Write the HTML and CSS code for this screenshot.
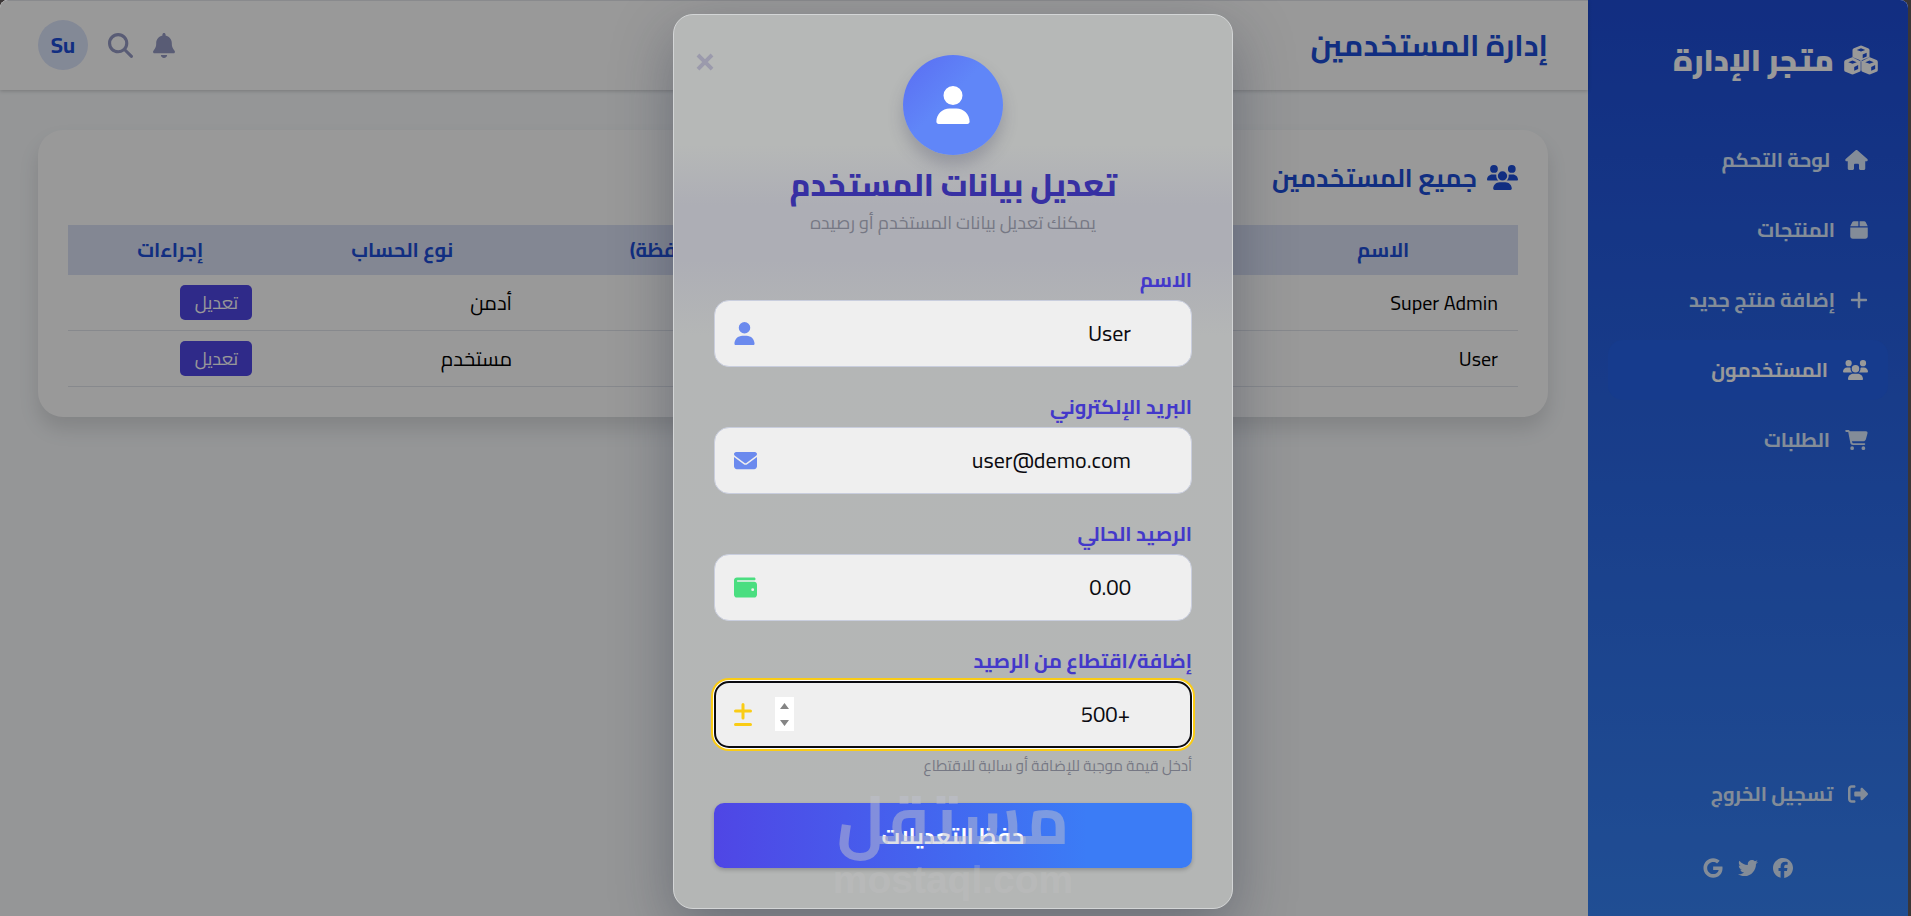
FILE: index.html
```html
<!DOCTYPE html>
<html lang="ar" dir="rtl">
<head>
<meta charset="utf-8">
<title>إدارة المستخدمين</title>
<link rel="stylesheet" href="styles.css">
</head>
<body>
<svg class="sprite" aria-hidden="true">
  <symbol id="i-user" viewBox="0 0 448 512"><path d="M224 256A128 128 0 1 0 224 0a128 128 0 1 0 0 256zm-45.7 48C79.8 304 0 383.8 0 482.3C0 498.7 13.3 512 29.7 512l388.6 0c16.4 0 29.7-13.3 29.7-29.7C448 383.8 368.2 304 269.7 304l-91.4 0z"/></symbol>
  <symbol id="i-envelope" viewBox="0 0 512 512"><path d="M48 64C21.500 64 0 85.500 0 112c0 15.100 7.100 29.300 19.200 38.400L236.800 313.600c11.400 8.500 27 8.500 38.400 0L492.800 150.400c12.100-9.100 19.200-23.300 19.200-38.400c0-26.500-21.500-48-48-48L48 64zM0 176L0 384c0 35.300 28.700 64 64 64l384 0c35.300 0 64-28.700 64-64l0-208L294.400 339.200c-22.800 17.100-54 17.100-76.800 0L0 176z"/></symbol>
  <symbol id="i-wallet" viewBox="0 0 512 512"><path d="M64 32C28.700 32 0 60.700 0 96L0 416c0 35.300 28.700 64 64 64l384 0c35.300 0 64-28.700 64-64l0-224c0-35.300-28.700-64-64-64L80 128c-8.800 0-16-7.200-16-16s7.200-16 16-16l368 0c17.700 0 32-14.300 32-32s-14.300-32-32-32L64 32zM416 272a32 32 0 1 1 0 64 32 32 0 1 1 0-64z"/></symbol>
  <symbol id="i-home" viewBox="0 0 576 512"><path d="M575.8 255.500c0 18-15 32.100-32 32.100l-32 0 .7 160.200c0 2.700-.2 5.400-.5 8.100l0 16.200c0 22.100-17.900 40-40 40l-16 0c-1.100 0-2.200 0-3.300-.1c-1.400 .1-2.800 .1-4.200 .1L416 512l-24 0c-22.100 0-40-17.900-40-40l0-24 0-64c0-17.700-14.300-32-32-32l-64 0c-17.700 0-32 14.300-32 32l0 64 0 24c0 22.100-17.900 40-40 40l-24 0-31.900 0c-1.500 0-3-.1-4.500-.2c-1.200 .1-2.400 .2-3.600 .2l-16 0c-22.100 0-40-17.900-40-40l0-112c0-.9 0-1.900 .1-2.800l0-69.700-32 0c-18 0-32-14-32-32.100c0-9 3-17 10-24L266.400 8c7-7 15-8 22-8s15 2 21 7L564.800 231.500c8 7 12 15 11 24z"/></symbol>
  <symbol id="i-box" viewBox="0 0 448 512"><path d="M50.700 58.500L0 160l208 0 0-128L93.700 32C75.500 32 58.900 42.300 50.700 58.500zM240 160l208 0L397.300 58.500C389.100 42.300 372.500 32 354.300 32L240 32l0 128zm208 32L0 192 0 416c0 35.300 28.700 64 64 64l320 0c35.300 0 64-28.700 64-64l0-224z"/></symbol>
  <symbol id="i-plus" viewBox="0 0 448 512"><path d="M256 80c0-17.700-14.300-32-32-32s-32 14.300-32 32l0 144L48 224c-17.700 0-32 14.300-32 32s14.300 32 32 32l144 0 0 144c0 17.700 14.300 32 32 32s32-14.300 32-32l0-144 144 0c17.700 0 32-14.300 32-32s-14.300-32-32-32l-144 0 0-144z"/></symbol>
  <symbol id="i-users" viewBox="0 0 640 512"><path d="M144 0a80 80 0 1 1 0 160A80 80 0 1 1 144 0zM512 0a80 80 0 1 1 0 160A80 80 0 1 1 512 0zM0 298.700C0 239.800 47.800 192 106.700 192l42.700 0c15.900 0 31 3.500 44.600 9.700c-1.300 7.200-1.900 14.700-1.900 22.300c0 38.200 16.800 72.500 43.300 96c-.2 0-.4 0-.7 0L21.300 320C9.600 320 0 310.400 0 298.700zM405.300 320c-.2 0-.4 0-.7 0c26.600-23.500 43.300-57.800 43.300-96c0-7.600-.7-15-1.900-22.300c13.600-6.300 28.700-9.700 44.600-9.700l42.700 0C592.200 192 640 239.800 640 298.700c0 11.800-9.600 21.300-21.300 21.300l-213.300 0zM224 224a96 96 0 1 1 192 0 96 96 0 1 1 -192 0zM128 485.300C128 411.700 187.700 352 261.300 352l117.300 0C452.300 352 512 411.700 512 485.300c0 14.700-11.900 26.700-26.700 26.700l-330.700 0c-14.700 0-26.700-11.900-26.700-26.700z"/></symbol>
  <symbol id="i-cart" viewBox="0 0 576 512"><path d="M0 24C0 10.700 10.700 0 24 0L69.500 0c22 0 41.500 12.800 50.600 32l411 0c26.300 0 45.500 25 38.600 50.400l-41 152.300c-8.500 31.400-37 53.300-69.500 53.300l-288.500 0 5.400 28.500c2.200 11.300 12.100 19.500 23.600 19.500L488 336c13.300 0 24 10.700 24 24s-10.700 24-24 24l-288.300 0c-34.600 0-64.300-24.600-70.700-58.500L77.400 54.500c-.7-3.800-4-6.500-7.900-6.500L24 48C10.700 48 0 37.300 0 24zM128 464a48 48 0 1 1 96 0 48 48 0 1 1 -96 0zm336-48a48 48 0 1 1 0 96 48 48 0 1 1 0-96z"/></symbol>
  <symbol id="i-logout" viewBox="0 0 512 512"><path d="M377.900 105.900L500.700 228.700c7.200 7.200 11.300 17.100 11.300 27.300s-4.100 20.100-11.300 27.300L377.900 406.100c-6.400 6.400-15 9.900-24 9.900c-18.700 0-33.900-15.200-33.900-33.900l0-62.100-128 0c-17.700 0-32-14.300-32-32l0-64c0-17.700 14.300-32 32-32l128 0 0-62.100c0-18.700 15.200-33.900 33.900-33.900c9 0 17.600 3.600 24 9.900zM160 96L96 96c-17.700 0-32 14.300-32 32l0 256c0 17.700 14.300 32 32 32l64 0c17.700 0 32 14.300 32 32s-14.300 32-32 32l-64 0c-53 0-96-43-96-96L0 128C0 75 43 32 96 32l64 0c17.700 0 32 14.300 32 32s-14.300 32-32 32z"/></symbol>
  <symbol id="i-bell" viewBox="0 0 448 512"><path d="M224 0c-17.700 0-32 14.300-32 32l0 19.200C119 66 64 130.600 64 208l0 18.800c0 47-17.300 92.400-48.500 127.600l-7.400 8.300c-8.400 9.400-10.400 22.900-5.300 34.400S19.400 416 32 416l384 0c12.600 0 24-7.400 29.200-18.900s3.100-25-5.300-34.400l-7.400-8.300C401.300 319.200 384 273.900 384 226.800l0-18.800c0-77.400-55-142-128-156.800L256 32c0-17.700-14.300-32-32-32zm45.300 493.300c12-12 18.700-28.300 18.700-45.300l-64 0-64 0c0 17 6.700 33.300 18.700 45.300s28.300 18.700 45.300 18.700s33.300-6.700 45.300-18.700z"/></symbol>
  <symbol id="i-search" viewBox="0 0 512 512"><path d="M416 208c0 45.900-14.900 88.300-40 122.700L502.600 457.400c12.500 12.500 12.500 32.800 0 45.300s-32.800 12.500-45.300 0L330.700 376c-34.400 25.200-76.800 40-122.700 40C93.100 416 0 322.900 0 208S93.100 0 208 0S416 93.100 416 208zM208 352a144 144 0 1 0 0-288 144 144 0 1 0 0 288z"/></symbol>
  <symbol id="i-plusminus" viewBox="0 0 18 24"><path d="M9 1.500V15M1.500 8H16.500M1.500 21.500H16.500" fill="none" stroke="currentColor" stroke-width="3" stroke-linecap="round"/></symbol>
  <symbol id="i-close" viewBox="0 0 384 512"><path d="M72 136L312 376M312 136L72 376" fill="none" stroke="currentColor" stroke-width="84" stroke-linecap="square"/></symbol>
  <symbol id="i-cubes" viewBox="0 0 36 31"><path fill-rule="evenodd" d="M17 .4Q18 0 19 .4L25.500 3Q27 3.700 27 5V12.600L18 17L9 12.600V5Q9 3.700 10.500 3ZM13.500 4.800L18 6.600L22.500 4.800L18 3ZM19.800 9.800V13.600L24 11.700V7.900ZM8 12.800Q9 12.400 10 12.800L16.500 15.500Q17.700 16.200 17.700 17.500V26Q17.700 27.400 16.500 28L10 30.700Q9 31 8 30.700L1.500 28Q.2 27.400 .2 26V17.500Q.2 16.200 1.500 15.500ZM4.500 17.800L9 19.600L13.500 17.800L9 16ZM10.800 22.800V27L15 25.100V20.900ZM26 12.800Q27 12.400 28 12.800L34.500 15.500Q35.800 16.200 35.800 17.500V26Q35.800 27.400 34.500 28L28 30.700Q27 31 26 30.700L19.500 28Q18.300 27.400 18.300 26V17.500Q18.300 16.200 19.500 15.500ZM22.500 17.800L27 19.600L31.500 17.800L27 16ZM28.800 22.800V27L33 25.100V20.900Z"/></symbol>
  <symbol id="i-google" viewBox="0 0 488 512"><path d="M488 261.800C488 403.300 391.100 504 248 504 110.800 504 0 393.200 0 256S110.800 8 248 8c66.800 0 123 24.500 166.300 64.900l-67.500 64.900C258.500 52.600 94.300 116.600 94.300 256c0 86.500 69.100 156.600 153.700 156.600 98.200 0 135-70.400 140.800-106.900H248v-85.300h236.100c2.300 12.700 3.900 24.900 3.900 41.400z"/></symbol>
  <symbol id="i-twitter" viewBox="0 0 512 512"><path d="M459.370 151.716c.325 4.548.325 9.097.325 13.645 0 138.720-105.583 298.558-298.558 298.558-59.452 0-114.680-17.219-161.137-47.106 8.447.974 16.568 1.299 25.340 1.299 49.055 0 94.213-16.568 130.274-44.832-46.132-.975-84.792-31.188-98.112-72.772 6.498.974 12.995 1.624 19.818 1.624 9.421 0 18.843-1.300 27.614-3.573-48.081-9.747-84.143-51.980-84.143-102.985v-1.299c13.969 7.797 30.214 12.670 47.431 13.319-28.264-18.843-46.781-51.005-46.781-87.391 0-19.492 5.197-37.360 14.294-52.954 51.655 63.675 129.300 105.258 216.365 109.807-1.624-7.797-2.599-15.918-2.599-24.040 0-57.828 46.782-104.934 104.934-104.934 30.213 0 57.502 12.670 76.670 33.137 23.715-4.548 46.456-13.320 66.599-25.340-7.798 24.366-24.366 44.833-46.132 57.827 21.117-2.273 41.584-8.122 60.426-16.243-14.292 20.791-32.161 39.308-52.628 54.253z"/></symbol>
  <symbol id="i-facebook" viewBox="0 0 512 512"><path d="M512 256C512 114.600 397.400 0 256 0S0 114.600 0 256C0 376 82.700 476.800 194.200 504.500V334.200H141.400V256h52.800V222.300c0-87.100 39.400-127.500 125-127.500c16.200 0 44.200 3.200 55.700 6.400V172c-6-.6-16.500-1-29.600-1c-42 0-58.200 15.900-58.200 57.200V256h83.600l-14.400 78.200H287V510.100C413.800 494.800 512 386.900 512 256z"/></symbol>
</svg>

<div class="app">
  <aside class="sidebar">
    <div class="brand"><svg class="brand-icon"><use href="#i-cubes"/></svg><span>متجر الإدارة</span></div>
    <nav class="nav">
      <a class="nav-link" href="#"><svg class="ic w23"><use href="#i-home"/></svg>لوحة التحكم</a>
      <a class="nav-link" href="#"><svg class="ic w18"><use href="#i-box"/></svg>المنتجات</a>
      <a class="nav-link" href="#"><svg class="ic w18"><use href="#i-plus"/></svg>إضافة منتج جديد</a>
      <a class="nav-link active" href="#"><svg class="ic w25"><use href="#i-users"/></svg>المستخدمون</a>
      <a class="nav-link" href="#"><svg class="ic w23"><use href="#i-cart"/></svg>الطلبات</a>
    </nav>
    <a class="nav-link logout" href="#"><svg class="ic w20"><use href="#i-logout"/></svg>تسجيل الخروج</a>
    <div class="social">
      <a href="#" aria-label="Facebook"><svg class="ic w20"><use href="#i-facebook"/></svg></a>
      <a href="#" aria-label="Twitter"><svg class="ic w20"><use href="#i-twitter"/></svg></a>
      <a href="#" aria-label="Google"><svg class="ic w20"><use href="#i-google"/></svg></a>
    </div>
  </aside>

  <div class="page">
    <header class="topbar">
      <h1>إدارة المستخدمين</h1>
      <div class="tools">
        <button class="tool" type="button" aria-label="الإشعارات"><svg class="tool-icon bell"><use href="#i-bell"/></svg></button>
        <button class="tool" type="button" aria-label="بحث"><svg class="tool-icon"><use href="#i-search"/></svg></button>
        <span class="avatar">Su</span>
      </div>
    </header>
    <main class="content">
      <section class="card">
        <h2><svg class="card-icon"><use href="#i-users"/></svg>جميع المستخدمين</h2>
        <table class="users">
          <colgroup><col class="c-name"><col class="c-mail"><col class="c-balance"><col class="c-type"><col class="c-action"></colgroup>
          <thead><tr><th>الاسم</th><th>البريد الإلكتروني</th><th>الرصيد (المحفظة)</th><th>نوع الحساب</th><th>إجراءات</th></tr></thead>
          <tbody>
            <tr><td>Super Admin</td><td></td><td></td><td>أدمن</td><td><button class="edit" type="button">تعديل</button></td></tr>
            <tr><td>User</td><td></td><td></td><td>مستخدم</td><td><button class="edit" type="button">تعديل</button></td></tr>
          </tbody>
        </table>
      </section>
    </main>
  </div>

  <div class="overlay">
    <form class="modal" role="dialog" aria-labelledby="modal-title">
      <button class="close" type="button" aria-label="إغلاق"><svg class="close-icon"><use href="#i-close"/></svg></button>
      <div class="badge"><svg class="badge-icon"><use href="#i-user"/></svg></div>
      <h2 class="modal-title" id="modal-title">تعديل بيانات المستخدم</h2>
      <p class="modal-sub">يمكنك تعديل بيانات المستخدم أو رصيده</p>
      <div class="fields">
        <div class="field">
          <label for="name">الاسم</label>
          <div class="control"><input id="name" type="text" value="User"><svg class="field-icon blue narrow"><use href="#i-user"/></svg></div>
        </div>
        <div class="field">
          <label for="mail">البريد الإلكتروني</label>
          <div class="control"><input id="mail" type="text" value="user@demo.com"><svg class="field-icon blue"><use href="#i-envelope"/></svg></div>
        </div>
        <div class="field">
          <label for="balance">الرصيد الحالي</label>
          <div class="control"><input id="balance" type="text" value="0.00" readonly><svg class="field-icon green"><use href="#i-wallet"/></svg></div>
        </div>
        <div class="field">
          <label for="amount">إضافة/اقتطاع من الرصيد</label>
          <div class="control"><input class="current" id="amount" type="number" placeholder="+500"><svg class="field-icon yellow slim"><use href="#i-plusminus"/></svg>
            <svg class="spin" viewBox="0 0 19 34"><rect width="19" height="34" fill="#fff"/><path d="M5 12L9.500 6L14 12ZM5 23L9.500 29L14 23Z" fill="#858585"/></svg></div>
          <p class="hint">أدخل قيمة موجبة للإضافة أو سالبة للاقتطاع</p>
        </div>
      </div>
      <div class="submit-row">
        <button class="submit" type="submit">حفظ التعديلات</button>
        <div class="watermark" aria-hidden="true"><span class="wm-ar">مستقل</span><span class="wm-en">mostaql.com</span></div>
      </div>
    </form>
  </div>
</div>
</body>
</html>
```
FILE: styles.css
```css
* { box-sizing: border-box; }
body {
  margin: 0;
  background: #3b3636;
  font-family: Cairo, Roboto, "DejaVu Sans", sans-serif;
  font-size: 20px;
  line-height: 30px;
  color: #000;
}
h1, h2, p { margin: 0; }
a { color: inherit; text-decoration: none; }
button, input { font: inherit; }
svg { display: block; fill: currentColor; flex: none; }
.sprite { position: absolute; width: 0; height: 0; }

.app {
  position: relative;
  display: flex;
  min-height: 100vh;
  margin-right: 3px;
  border-radius: 8px 8px 0 0;
  overflow: hidden;
  background: #f8fafc;
}

.sidebar {
  flex: none;
  width: 320px;
  display: flex;
  flex-direction: column;
  padding: 30px 20px;
  background: linear-gradient(#1e4dd8, #3682f6);
  color: #dbeafe;
}
.brand {
  display: flex;
  align-items: center;
  gap: 10px;
  height: 60px;
  padding: 0 10px;
  margin-bottom: 40px;
  color: #fff;
  font-size: 30px;
  font-weight: 900;
}
.brand-icon { width: 34px; height: 30px; }
.nav { display: flex; flex-direction: column; gap: 10px; flex: 1; }
.nav-link {
  display: flex;
  align-items: center;
  gap: 15px;
  height: 60px;
  padding: 0 20px;
  border-radius: 15px;
  font-size: 20px;
  font-weight: 700;
}
.active { background: #2563eb; color: #fff; }
.ic { height: 20px; }
.w18 { width: 18px; }
.w20 { width: 20px; }
.w23 { width: 23px; }
.w25 { width: 25px; }
.social { display: flex; justify-content: center; gap: 15px; margin: 34px 0 8px; }

.page { flex: 1; min-width: 0; }
.topbar {
  display: flex;
  align-items: center;
  justify-content: space-between;
  height: 90px;
  padding: 0 40px 1px 38px;
  background: #fff;
  border-top: 1px solid #e5e7eb;
  box-shadow: 0 1px 4px rgba(0, 0, 0, .2);
}
h1 { font-size: 30px; color: #1d4ed8; }
.tools { display: flex; align-items: center; gap: 20px; }
.tool { border: 0; padding: 0; background: none; color: #9499c4; }
.tool-icon { width: 25px; height: 25px; }
.bell { width: 22px; }
.avatar {
  display: grid;
  place-items: center;
  width: 50px;
  height: 50px;
  border-radius: 50%;
  background: #dbe4fb;
  color: #1d4ed8;
  font-size: 22px;
  font-weight: 700;
}
.content { padding: 40px 40px 40px 38px; }
.card {
  padding: 30px;
  border-radius: 25px;
  background: #fff;
  box-shadow: 0 12px 20px rgba(0, 0, 0, .12);
}
.card h2 {
  display: flex;
  align-items: center;
  gap: 10px;
  height: 35px;
  margin-bottom: 30px;
  color: #1d4ed8;
  font-size: 25px;
}
.card-icon { width: 31px; height: 25px; }
.users { width: 100%; border-collapse: separate; border-spacing: 0; table-layout: fixed; }
.c-name { width: 18.6%; }
.c-mail { width: 25.4%; }
.c-balance { width: 24%; }
.c-type { width: 17.9%; }
.c-action { width: 14.1%; }
.users th { height: 50px; padding: 0 20px; background: #dbe2f6; color: #1d4ed8; font-size: 20px; }
.users td { height: 56px; padding: 0 20px; border-bottom: 1px solid #e2e4ec; text-align: right; }
.edit {
  display: block;
  width: 72px;
  height: 35px;
  padding: 0;
  border: 0;
  border-radius: 5px;
  background: #4f46e5;
  color: #fff;
  font-size: 18px;
}

.overlay {
  position: absolute;
  inset: 0;
  display: flex;
  justify-content: center;
  align-items: flex-start;
  padding: 14px 2px 7px 0;
  background: rgba(0, 0, 0, .4);
}
.modal {
  position: relative;
  width: 560px;
  padding: 40px;
  border: 1px solid #d3d5d6;
  border-radius: 20px;
  background: linear-gradient(#b6b8b7 130px, #adaeb5 190px, #adaeb5 245px, #b4b6b6 320px, #b4b6b5);
  box-shadow: 0 20px 60px rgba(31, 38, 60, .36);
}
.close {
  position: absolute;
  top: 35px;
  left: 20px;
  padding: 0;
  border: 0;
  background: none;
  color: #9b9aac;
}
.close-icon { width: 22px; height: 24px; }
.badge {
  display: grid;
  place-items: center;
  width: 100px;
  height: 100px;
  margin: 0 auto 8px;
  border-radius: 50%;
  background: linear-gradient(135deg, #5a6cf2, #6086f8 45%);
  color: #fff;
  box-shadow: 0 10px 15px rgba(60, 60, 90, .25);
}
.badge-icon { width: 34px; height: 38px; }
.modal-title { line-height: 45px; font-size: 31px; font-weight: 800; text-align: center; color: #3730a3; }
.modal-sub { margin: 2px 0 30px; line-height: 25px; font-size: 18px; text-align: center; color: #767884; }
.fields { display: flex; flex-direction: column; gap: 25px; }
.field label { display: block; margin-bottom: 5px; color: #4338ca; font-size: 20px; font-weight: 700; }
.control { position: relative; }
.control input {
  display: block;
  width: 100%;
  height: 67px;
  padding: 0 60px 2px;
  border: 1px solid #c9cede;
  border-radius: 15px;
  background: #efefef;
  color: #0b0b10;
  font-size: 22px;
  outline: none;
}
.control input::placeholder { color: #0b0b10; opacity: 1; }
.control input::-webkit-inner-spin-button { appearance: none; display: none; }
.control .current { border: 2px solid #0b0b10; box-shadow: 0 0 0 1px #fff, 0 0 0 3px #facc15; }
.field-icon { position: absolute; left: 20px; top: 22px; width: 23px; height: 23px; }
.narrow { width: 21px; }
.slim { width: 18px; height: 24px; }
.blue { color: #6b8aee; }
.green { color: #4ade80; }
.yellow { color: #facc15; }
.spin { position: absolute; left: 61px; top: 16px; width: 19px; height: 34px; }
.hint { margin-top: 5px; line-height: 25px; font-size: 15px; color: #767884; }
.submit-row { position: relative; margin-top: 25px; }
.submit {
  display: block;
  width: 100%;
  height: 65px;
  border: 0;
  border-radius: 10px;
  background: linear-gradient(90deg, #4f46e5, #3b7cf6 78%);
  box-shadow: 0 2px 4px rgba(0, 0, 0, .2);
  color: #fff;
  font-size: 22px;
  font-weight: 700;
}
.watermark {
  position: absolute;
  inset: -22px 0 auto;
  display: flex;
  flex-direction: column;
  align-items: center;
  pointer-events: none;
  font-weight: 700;
  color: rgba(190, 192, 205, .5);
}
.wm-ar { line-height: 76px; font-size: 68px; }
.wm-en { line-height: 45px; font-family: "Liberation Sans", sans-serif; font-size: 39px; color: rgba(196, 196, 196, .3); }
```
